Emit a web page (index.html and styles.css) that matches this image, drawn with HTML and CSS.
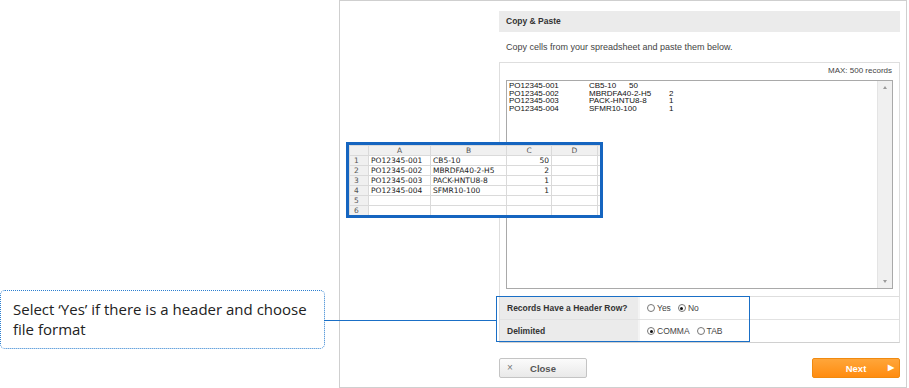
FILE: index.html
```html
<html>
  <head>
    <link rel="stylesheet" href="styles.css">
    <title>Copy &amp; Paste</title>
  </head>
  <body>
    <div class="page">
      <aside class="notes">
        <div class="callout">Select ‘Yes’ if there is a header and choose<br>file format</div>
      </aside>

      <main class="panel">
        <div class="dialog">
          <div class="dialog-title">Copy &amp; Paste</div>
          <p class="hint">Copy cells from your spreadsheet and paste them below.</p>

          <div class="paste-box">
            <div class="max">MAX: 500 records</div>
            <div class="paste-area">
              <div class="paste-text">PO12345-001	CB5-10	50
PO12345-002	MBRDFA40-2-H5	2
PO12345-003	PACK-HNTU8-8	1
PO12345-004	SFMR10-100	1</div>
              <div class="scrollbar">
                <span class="arrow up"></span>
                <span class="arrow down"></span>
              </div>
            </div>

            <div class="options">
              <div class="opt-row">
                <div class="opt-label">Records Have a Header Row?</div>
                <div class="opt-value">
                  <label class="choice"><span class="radio"></span>Yes</label>
                  <label class="choice"><span class="radio checked"></span>No</label>
                </div>
              </div>
              <div class="opt-row">
                <div class="opt-label">Delimited</div>
                <div class="opt-value">
                  <label class="choice"><span class="radio checked"></span>COMMA</label>
                  <label class="choice"><span class="radio"></span>TAB</label>
                </div>
              </div>
            </div>
          </div>

          <div class="actions">
            <button class="btn btn-close"><span class="x">×</span>Close</button>
            <button class="btn btn-next">Next<span class="tri">▶</span></button>
          </div>
        </div>
      </main>

      <!-- overlays: spreadsheet sample, callout line, highlight -->
      <div class="sheet">
        <table>
          <colgroup>
            <col class="c-row"><col class="c-a"><col class="c-b"><col class="c-c"><col class="c-d"><col>
          </colgroup>
          <tr class="head"><th class="corner"></th><th>A</th><th>B</th><th>C</th><th>D</th><th></th></tr>
          <tr><th>1</th><td>PO12345-001</td><td>CB5-10</td><td class="num">50</td><td></td><td></td></tr>
          <tr><th>2</th><td>PO12345-002</td><td>MBRDFA40-2-H5</td><td class="num">2</td><td></td><td></td></tr>
          <tr><th>3</th><td>PO12345-003</td><td>PACK-HNTU8-8</td><td class="num">1</td><td></td><td></td></tr>
          <tr><th>4</th><td>PO12345-004</td><td>SFMR10-100</td><td class="num">1</td><td></td><td></td></tr>
          <tr><th>5</th><td></td><td></td><td></td><td></td><td></td></tr>
          <tr><th>6</th><td></td><td></td><td></td><td></td><td></td></tr>
        </table>
      </div>
      <div class="connector"></div>
      <div class="focus-box"></div>
    </div>
  </body>
</html>
```

FILE: styles.css
```css
body {
  margin: 0;
  font-family: "Liberation Sans", Arial, sans-serif;
  color: #444;
  background: white;
}

.page {
  position: relative;
  display: flex;
  width: 909px;
  height: 388px;
}

.notes {
  width: 339px;
}

.callout {
  box-sizing: border-box;
  width: 325px;
  height: 59px;
  margin-top: 290px;
  padding: 8px 10px 0 12px;
  border: 1px dotted #2c7fd0;
  border-radius: 5px;
  font-family: "Open Sans", "Liberation Sans", sans-serif;
  font-size: 15px;
  line-height: 20px;
  color: #222;
}

.panel {
  box-sizing: border-box;
  width: 568px;
  height: 388px;
  border: 1px solid #cfcfcf;
  padding: 10px 6px 0 159px;
}

.dialog-title {
  height: 21px;
  line-height: 21px;
  padding-left: 7px;
  background: #ebebeb;
  font-size: 8.5px;
  font-weight: bold;
  color: #333;
}

.hint {
  margin: 8px 0 8px 7px;
  font-size: 9px;
  line-height: 14px;
  color: #444;
}

.paste-box {
  border: 1px solid #dedede;
  border-bottom-color: #d0d0d0;
}

.max {
  text-align: right;
  padding-right: 7px;
  font-size: 8px;
  line-height: 16px;
  height: 17px;
  color: #444;
}

.paste-area {
  display: flex;
  height: 207px;
  margin: 0 6px 7px 6px;
  border: 1px solid #a9a9a9;
}

.paste-text {
  flex: 1;
  padding: 1px 2px;
  white-space: pre;
  tab-size: 40px;
  font-size: 8px;
  line-height: 7.6px;
  color: #111;
}

.scrollbar {
  position: relative;
  width: 14px;
  background: #f0f0f0;
  border-left: 1px solid #e4e4e4;
}

.arrow {
  position: absolute;
  left: 5px;
  width: 0;
  height: 0;
  border-left: 2px solid transparent;
  border-right: 2px solid transparent;
}

.arrow.up {
  top: 5px;
  border-bottom: 3px solid #9a9a9a;
}

.arrow.down {
  bottom: 5px;
  border-top: 3px solid #9a9a9a;
}

.options {
  border-top: 1px solid #dedede;
}

.opt-row {
  display: flex;
  height: 22px;
  border-bottom: 1px solid #e2e2e2;
}

.opt-row:last-child {
  border-bottom: none;
}

.opt-label {
  width: 131px;
  padding-left: 7px;
  background: #ebebeb;
  border-right: 2px solid #f4f4f4;
  font-size: 8.5px;
  font-weight: bold;
  line-height: 22px;
  color: #333;
}

.opt-value {
  display: flex;
  align-items: center;
  gap: 7px;
  padding-left: 7px;
  font-size: 8.5px;
  color: #444;
}

.choice {
  display: flex;
  align-items: center;
  gap: 2px;
}

.radio {
  position: relative;
  box-sizing: border-box;
  width: 8px;
  height: 8px;
  border: 1px solid #777;
  border-radius: 50%;
  background: white;
}

.radio.checked::after {
  content: "";
  position: absolute;
  left: 1.5px;
  top: 1.5px;
  width: 3px;
  height: 3px;
  border-radius: 50%;
  background: #111;
}

.actions {
  display: flex;
  justify-content: space-between;
  margin-top: 15px;
}

.btn {
  position: relative;
  box-sizing: border-box;
  width: 88px;
  height: 20px;
  border-radius: 2px;
  font-family: "Liberation Sans", Arial, sans-serif;
  font-size: 9.5px;
  font-weight: bold;
  padding: 0;
}

.btn-close {
  border: 1px solid #c4c4c4;
  background: linear-gradient(#fbfbfb, #e9e9e9);
  color: #555;
}

.btn-close .x {
  position: absolute;
  left: 7px;
  top: 3px;
  font-weight: normal;
  font-size: 10px;
  color: #777;
}

.btn-next {
  border: 1px solid #f08a10;
  background: linear-gradient(#ffa63a, #ff8c10);
  color: white;
}

.btn-next .tri {
  position: absolute;
  right: 5px;
  top: 4px;
  font-size: 8px;
}

/* spreadsheet sample lying over the panel edge */
.sheet {
  position: absolute;
  left: 346px;
  top: 142px;
  width: 251px;
  height: 70px;
  border: 3px solid #1565c0;
  overflow: hidden;
  background: white;
}

.sheet table {
  table-layout: fixed;
  border-collapse: collapse;
  width: 260px;
  font-family: "DejaVu Sans", "Liberation Sans", sans-serif;
  font-size: 7.5px;
  color: #222;
}

.sheet col.c-row { width: 19px; }
.sheet col.c-a { width: 62px; }
.sheet col.c-b { width: 76px; }
.sheet col.c-c { width: 45px; }
.sheet col.c-d { width: 46px; }

.sheet th,
.sheet td {
  height: 9px;
  padding: 0 2px;
  border: 1px solid #dadada;
  line-height: 9px;
  white-space: nowrap;
  overflow: hidden;
}

.sheet th {
  background: #f0f0f0;
  font-weight: normal;
  color: #555;
  text-align: left;
  padding-left: 4px;
}

.sheet tr.head th {
  height: 10px;
  text-align: center;
  padding: 0;
}

.sheet td.num {
  text-align: right;
}

.connector {
  position: absolute;
  left: 324px;
  top: 320px;
  width: 172px;
  height: 1px;
  background: #1a6fc6;
}

.focus-box {
  position: absolute;
  left: 496px;
  top: 296px;
  width: 252px;
  height: 44px;
  border: 1px solid #1a6fc6;
}
```
